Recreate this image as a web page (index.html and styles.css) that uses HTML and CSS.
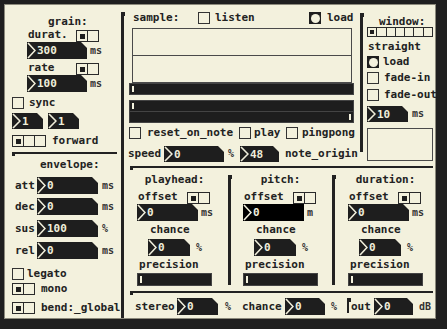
FILE: index.html
```html
<!DOCTYPE html>
<html lang="en">
<head>
  <meta charset="UTF-8">
  <title>grain sampler</title>
  <link rel="stylesheet" href="styles.css">
</head>
<body>
  <div class="patch">

    <!-- grain + envelope -->
    <div class="col-left">
      <div class="lbl t-grain">grain:</div>
      <div class="row r-durat">
        <span class="lbl l-top">durat.</span>
        <span class="hradio"><i class="on"></i><i></i></span>
      </div>
      <div class="row r-num">
        <span class="num w60"><svg viewBox="0 0 9 17" preserveAspectRatio="none"><polyline points="1,1 8,8.5 1,16"/></svg>300</span><span class="unit u3">ms</span>
      </div>
      <div class="row r-rate">
        <span class="lbl l-top">rate</span>
        <span class="hradio"><i class="on"></i><i></i></span>
      </div>
      <div class="row r-num">
        <span class="num w60"><svg viewBox="0 0 9 17" preserveAspectRatio="none"><polyline points="1,1 8,8.5 1,16"/></svg>100</span><span class="unit u3">ms</span>
      </div>
      <div class="row r-sync">
        <span class="tgl"></span><span class="lbl ml5">sync</span>
      </div>
      <div class="row r-ones">
        <span class="num w31 h16"><svg viewBox="0 0 9 17" preserveAspectRatio="none"><polyline points="1,1 8,8.5 1,16"/></svg>1</span>
        <span class="num w31 h16"><svg viewBox="0 0 9 17" preserveAspectRatio="none"><polyline points="1,1 8,8.5 1,16"/></svg>1</span>
      </div>
      <div class="row r-fwd">
        <span class="hradio"><i class="on"></i><i></i><i></i></span><span class="lbl ml6">forward</span>
      </div>
      <div class="hline h-left"></div>
      <div class="lbl t-env">envelope:</div>
      <div class="row r-env first">
        <span class="lbl l-env">att</span>
        <span class="num w61"><svg viewBox="0 0 9 17" preserveAspectRatio="none"><polyline points="1,1 8,8.5 1,16"/></svg>0</span><span class="unit u4">ms</span>
      </div>
      <div class="row r-env m4">
        <span class="lbl l-env">dec</span>
        <span class="num w61"><svg viewBox="0 0 9 17" preserveAspectRatio="none"><polyline points="1,1 8,8.5 1,16"/></svg>0</span><span class="unit u4">ms</span>
      </div>
      <div class="row r-env">
        <span class="lbl l-env">sus</span>
        <span class="num w61"><svg viewBox="0 0 9 17" preserveAspectRatio="none"><polyline points="1,1 8,8.5 1,16"/></svg>100</span><span class="unit u4">%</span>
      </div>
      <div class="row r-env">
        <span class="lbl l-env">rel</span>
        <span class="num w61"><svg viewBox="0 0 9 17" preserveAspectRatio="none"><polyline points="1,1 8,8.5 1,16"/></svg>0</span><span class="unit u4">ms</span>
      </div>
      <div class="row r-legato">
        <span class="tgl"></span><span class="lbl ml3">legato</span>
      </div>
      <div class="row r-mono">
        <span class="hradio"><i class="on"></i><i></i></span><span class="lbl ml6">mono</span>
      </div>
      <div class="row r-bend">
        <span class="hradio"><i class="on"></i><i></i></span><span class="lbl ml6">bend:_global</span>
      </div>
    </div>

    <div class="vline v-main"></div>

    <div class="col-right">
      <div class="top">
        <!-- sample -->
        <div class="sample">
          <div class="row s-head">
            <span class="lbl l-sample">sample:</span>
            <span class="tgl"></span><span class="lbl l-listen">listen</span>
            <span class="bng"></span><span class="lbl ml6">load</span>
          </div>
          <div class="array"><div></div><div></div></div>
          <div class="hsl s-one"><i></i></div>
          <div class="hsl-pair">
            <div class="hsl"><i></i></div>
            <div class="hsl end"><i></i></div>
          </div>
          <div class="row s-opts">
            <span class="tgl"></span><span class="lbl l-reset">reset_on_note</span>
            <span class="tgl"></span><span class="lbl l-play">play</span>
            <span class="tgl"></span><span class="lbl ml4">pingpong</span>
          </div>
          <div class="row s-speed">
            <span class="lbl l-speed">speed</span>
            <span class="num w60 h16"><svg viewBox="0 0 9 17" preserveAspectRatio="none"><polyline points="1,1 8,8.5 1,16"/></svg>0</span>
            <span class="unit l-pct">%</span>
            <span class="num w39 h16"><svg viewBox="0 0 9 17" preserveAspectRatio="none"><polyline points="1,1 8,8.5 1,16"/></svg>48</span>
            <span class="lbl ml6">note_origin</span>
          </div>
        </div>

        <div class="vline v-top"></div>

        <!-- window -->
        <div class="window">
          <div class="lbl t-window">window:</div>
          <div class="hradio h-win"><i class="on"></i><i></i><i></i><i></i><i></i><i></i><i></i></div>
          <div class="lbl t-straight">straight</div>
          <div class="row w-load"><span class="bng"></span><span class="lbl ml4">load</span></div>
          <div class="row w-fin"><span class="tgl"></span><span class="lbl ml5">fade-in</span></div>
          <div class="row w-fout"><span class="tgl"></span><span class="lbl ml5">fade-out</span></div>
          <div class="row w-num">
            <span class="num w41 h16"><svg viewBox="0 0 9 17" preserveAspectRatio="none"><polyline points="1,1 8,8.5 1,16"/></svg>10</span><span class="unit u4">ms</span>
          </div>
          <div class="wbox"></div>
        </div>
      </div>

      <div class="hline h-wide"></div>

      <div class="mods">
        <div class="mod">
          <div class="lbl mod-title">playhead:</div>
          <div class="row mod-off"><span class="lbl l-top">offset</span><span class="hradio"><i class="on"></i><i></i></span></div>
          <div class="row mod-num"><span class="num w61"><svg viewBox="0 0 9 17" preserveAspectRatio="none"><polyline points="1,1 8,8.5 1,16"/></svg>0</span><span class="unit u3">ms</span></div>
          <div class="lbl mod-chance">chance</div>
          <div class="row mod-ch"><span class="num w42"><svg viewBox="0 0 9 17" preserveAspectRatio="none"><polyline points="1,1 8,8.5 1,16"/></svg>0</span><span class="unit u6">%</span></div>
          <div class="lbl mod-prec">precision</div>
          <div class="hsl mod-hsl"><i></i></div>
        </div>
        <div class="vline v-mod"></div>
        <div class="mod pitch">
          <div class="lbl mod-title">pitch:</div>
          <div class="row mod-off"><span class="lbl l-top">offset</span><span class="hradio"><i class="on"></i><i></i></span></div>
          <div class="row mod-num"><span class="num w61 plain"><svg viewBox="0 0 9 17" preserveAspectRatio="none"><polyline points="1,1 8,8.5 1,16"/></svg>0</span><span class="unit u3">m</span></div>
          <div class="lbl mod-chance">chance</div>
          <div class="row mod-ch"><span class="num w42"><svg viewBox="0 0 9 17" preserveAspectRatio="none"><polyline points="1,1 8,8.5 1,16"/></svg>0</span><span class="unit u6">%</span></div>
          <div class="lbl mod-prec">precision</div>
          <div class="hsl mod-hsl"><i></i></div>
        </div>
        <div class="vline v-mod"></div>
        <div class="mod">
          <div class="lbl mod-title">duration:</div>
          <div class="row mod-off"><span class="lbl l-top">offset</span><span class="hradio"><i class="on"></i><i></i></span></div>
          <div class="row mod-num"><span class="num w61"><svg viewBox="0 0 9 17" preserveAspectRatio="none"><polyline points="1,1 8,8.5 1,16"/></svg>0</span><span class="unit u3">ms</span></div>
          <div class="lbl mod-chance">chance</div>
          <div class="row mod-ch"><span class="num w42"><svg viewBox="0 0 9 17" preserveAspectRatio="none"><polyline points="1,1 8,8.5 1,16"/></svg>0</span><span class="unit u6">%</span></div>
          <div class="lbl mod-prec">precision</div>
          <div class="hsl mod-hsl"><i></i></div>
        </div>
      </div>

      <div class="hline h-wide"></div>

      <!-- output -->
      <div class="row bottom">
        <span class="lbl l-stereo">stereo</span>
        <span class="num w41"><svg viewBox="0 0 9 17" preserveAspectRatio="none"><polyline points="1,1 8,8.5 1,16"/></svg>0</span>
        <span class="unit l-pct1">%</span>
        <span class="lbl l-chance">chance</span>
        <span class="num w40"><svg viewBox="0 0 9 17" preserveAspectRatio="none"><polyline points="1,1 8,8.5 1,16"/></svg>0</span>
        <span class="unit l-pct2">%</span>
        <span class="vline v-out"></span>
        <span class="lbl l-out">out</span>
        <span class="num w39"><svg viewBox="0 0 9 17" preserveAspectRatio="none"><polyline points="1,1 8,8.5 1,16"/></svg>0</span>
        <span class="unit u6">dB</span>
      </div>
    </div>
  </div>
</body>
</html>
```

FILE: styles.css
```css
body {
  margin: 0;
  background: #1f1f1f;
  font-family: "DejaVu Sans Mono", monospace;
  font-weight: bold;
  font-size: 11px;
  color: #222;
}

.patch {
  margin: 4px 0 0 4px;
  width: 432px;
  height: 315px;
  box-sizing: border-box;
  border: 1px solid #8c8a7c;
  background: #f3f1dd;
  display: grid;
  grid-template-columns: 116px 3px 311px;
}

.row {
  display: flex;
  align-items: center;
}

.lbl {
  line-height: 12px;
  white-space: nowrap;
  flex: none;
}

.unit {
  font-size: 10px;
  line-height: 12px;
  color: #333;
  flex: none;
}

.ml3 { margin-left: 3px; }
.ml4 { margin-left: 4px; }
.ml5 { margin-left: 5px; }
.ml6 { margin-left: 6px; }
.u3 { margin-left: 3px; }
.u4 { margin-left: 4px; }
.u6 { margin-left: 6px; }
.l-top { margin-bottom: 3px; }

/* widgets */
.num {
  display: inline-flex;
  align-items: center;
  gap: 1px;
  flex: none;
  height: 17px;
  box-sizing: border-box;
  background: #1e1e1e;
  color: #f0eedb;
  clip-path: polygon(0 0, calc(100% - 6px) 0, 100% 6px, 100% 100%, 0 100%);
}

.num.plain {
  clip-path: none;
  background: #000;
}

.num svg {
  width: 9px;
  height: 100%;
  flex: none;
}

.num polyline {
  fill: none;
  stroke: #f0eedb;
  stroke-width: 1.6;
}

.h16 { height: 16px; }
.w31 { width: 31px; }
.w39 { width: 39px; }
.w40 { width: 40px; }
.w41 { width: 41px; }
.w42 { width: 42px; }
.w60 { width: 60px; }
.w61 { width: 61px; }

.tgl {
  width: 12px;
  height: 12px;
  box-sizing: border-box;
  border: 1px solid #333;
  background: #f3f1dd;
  flex: none;
}

.hradio {
  display: flex;
  height: 12px;
  box-sizing: border-box;
  border: 1px solid #2a2a2a;
  background: #f3f1dd;
  flex: none;
}

.hradio i {
  width: 10px;
}

.hradio i + i {
  border-left: 1px solid #2a2a2a;
}

.hradio .on {
  display: flex;
  align-items: center;
  justify-content: center;
}

.hradio .on::before {
  content: "";
  width: 5px;
  height: 5px;
  background: #1e1e1e;
}

.bng {
  width: 12px;
  height: 12px;
  background: #1e1e1e;
  display: flex;
  align-items: center;
  justify-content: center;
  flex: none;
}

.bng::before {
  content: "";
  width: 9px;
  height: 9px;
  border-radius: 50%;
  background: #f3f1dd;
}

.hsl {
  display: flex;
  align-items: center;
  box-sizing: border-box;
  background: #1e1e1e;
  border: 1px solid #444;
}

.hsl i {
  width: 2px;
  height: calc(100% - 4px);
  margin-left: 2px;
  background: #f3f1dd;
}

.hsl.end {
  justify-content: flex-end;
}

.hsl.end i {
  margin: 0 2px 0 0;
}

/* divider lines, with the little grab square at their start */
.vline {
  background: #222;
}

.vline::before {
  content: "";
  display: block;
  width: 4px;
  height: 4px;
  background: #222;
}

.hline {
  height: 2px;
  background: #222;
}

.hline::before {
  content: "";
  display: block;
  width: 3px;
  height: 4px;
  background: #222;
}

/* left column */
.col-left {
  display: flex;
  flex-direction: column;
  padding-left: 7px;
}

.t-grain { margin: 11px 0 0 36px; }
.r-durat { margin-top: 2px; height: 12px; }
.r-rate { margin-top: 4px; height: 12px; }
.r-durat .lbl, .r-rate .lbl { margin-left: 16px; width: 48px; }
.r-num { height: 17px; margin-left: 15px; }
.r-sync { margin-top: 5px; height: 12px; }
.r-ones { margin-top: 4px; height: 16px; gap: 5px; }
.r-fwd { margin-top: 6px; height: 12px; }
.h-left { margin-top: 5px; width: 105px; }
.t-env { margin: 5px 0 0 28px; }
.r-env { margin-top: 5px; height: 17px; }
.r-env.first { margin-top: 6px; }
.r-env.m4 { margin-top: 4px; }
.l-env { margin-left: 3px; width: 22px; }
.r-legato { margin-top: 9px; height: 12px; }
.r-mono { margin-top: 3px; height: 12px; }
.r-bend { margin-top: 7px; height: 12px; }

.v-main {
  margin-top: 7px;
}

/* right side */
.col-right {
  display: grid;
  grid-template-rows: 161px 2px 123px 2px 1fr;
}

.top {
  display: grid;
  grid-template-columns: 236px 3px 72px;
}

.sample {
  display: flex;
  flex-direction: column;
}

.s-head { margin-top: 7px; height: 12px; padding-left: 9px; }
.l-sample { width: 65px; }
.l-listen { margin-left: 5px; width: 94px; }

.array {
  margin: 4px 0 0 8px;
  width: 220px;
  height: 55px;
  box-sizing: border-box;
  border: 1px solid #4a4a4a;
  display: flex;
  flex-direction: column;
}

.array div { flex: 1; }
.array div + div { border-top: 1px solid #4a4a4a; }

.s-one {
  margin-left: 5px;
  width: 225px;
  height: 12px;
}

.hsl-pair {
  margin: 5px 0 0 5px;
  width: 225px;
  display: flex;
  flex-direction: column;
}

.hsl-pair .hsl { height: 12px; }
.hsl-pair .hsl + .hsl { margin-top: -1px; }

.s-opts { margin-top: 4px; height: 12px; padding-left: 5px; }
.l-reset { margin-left: 6px; width: 92px; }
.l-play { margin-left: 3px; width: 32px; }
.s-speed { margin-top: 7px; height: 16px; padding-left: 4px; }
.l-speed { width: 36px; }
.l-pct { margin-left: 4px; width: 12px; }

.v-top {
  margin-top: 8px;
  height: 139px;
}

.window {
  display: flex;
  flex-direction: column;
}

.t-window { margin: 11px 0 0 16px; height: 11px; line-height: 11px; }
.h-win { margin-left: 4px; width: 66px; height: 10px; }
.h-win i { flex: 1; width: auto; }
.h-win .on::before { width: 4px; height: 4px; }
.t-straight { margin: 4px 0 0 5px; }
.w-load { margin: 3px 0 0 4px; height: 12px; }
.w-fin { margin: 4px 0 0 4px; height: 12px; }
.w-fout { margin: 5px 0 0 4px; height: 12px; }
.w-num { margin: 5px 0 0 4px; height: 16px; }

.wbox {
  margin: 6px 0 0 4px;
  width: 66px;
  height: 33px;
  box-sizing: border-box;
  border: 1px solid #4a4a4a;
}

.h-wide {
  margin: 0 2px 0 6px;
}

.mods {
  display: grid;
  grid-template-columns: 104px 3px 101px 3px 99px;
}

.v-mod {
  margin-top: 7px;
  height: 110px;
}

.mod {
  display: flex;
  flex-direction: column;
  padding-left: 13px;
}

.mod.pitch { padding-left: 12px; }

.mod-title { margin-top: 6px; width: 75px; text-align: center; }
.mod-off { margin-top: 6px; height: 12px; }
.mod-off .lbl { margin-left: 1px; width: 49px; }
.mod-num { height: 17px; }
.mod-chance { margin: 3px 0 0 13px; }
.mod-ch { margin: 3px 0 0 11px; height: 17px; }
.mod-prec { margin: 3px 0 0 2px; }

.mod-hsl {
  margin-top: 2px;
  width: 75px;
  height: 13px;
}

.bottom {
  margin-top: 5px;
  height: 17px;
  align-self: start;
}

.l-stereo { margin-left: 11px; width: 42px; }
.l-pct1 { margin-left: 7px; width: 17px; }
.l-chance { width: 43px; }
.l-pct2 { margin-left: 6px; width: 16px; }
.v-out { width: 2px; height: 15px; align-self: flex-start; }
.l-out { margin-left: 2px; width: 23px; }
```
